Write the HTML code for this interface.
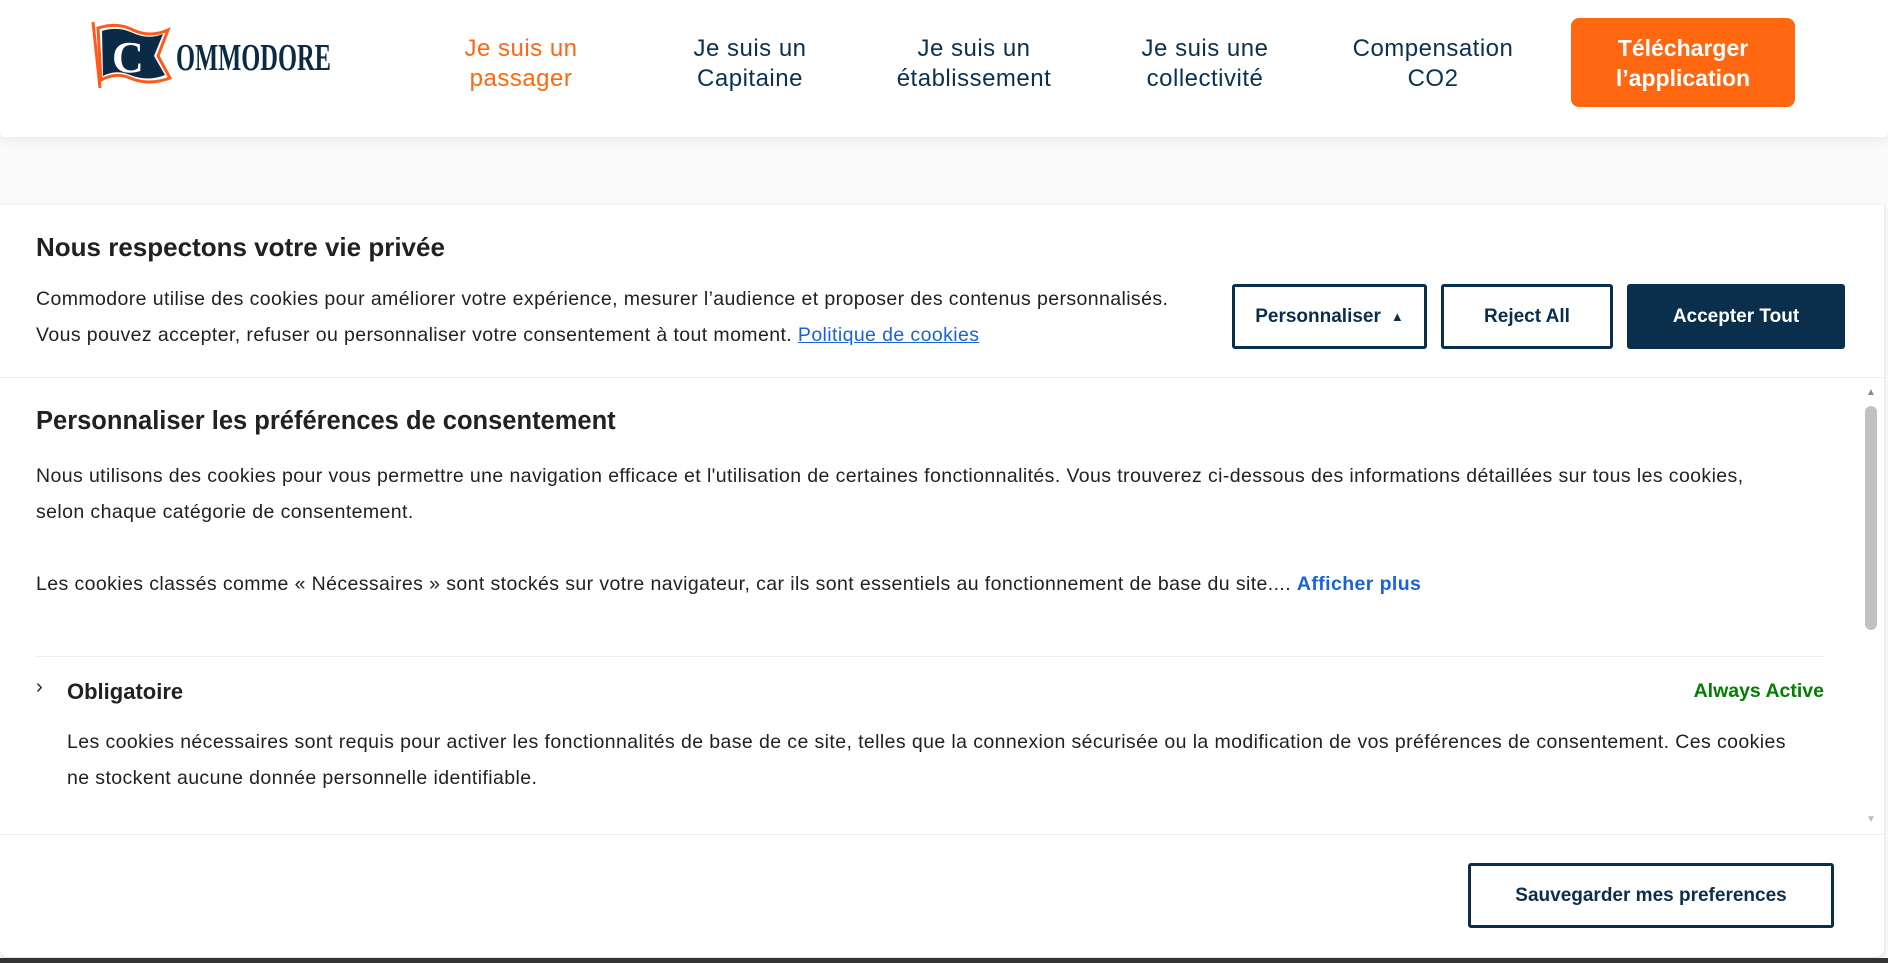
<!DOCTYPE html>
<html><head><meta charset="utf-8"><style>
*{margin:0;padding:0;box-sizing:border-box}
body{width:1888px;height:963px;overflow:hidden;background:#fafafa;font-family:"Liberation Sans",sans-serif;position:relative;color:#212121}
.hdr{position:absolute;left:0;top:0;width:1888px;height:137px;background:#fff;box-shadow:0 4px 12px rgba(0,0,0,.06);border-radius:0 0 6px 6px}
.nav{position:absolute;top:34px;text-align:center;font-size:24px;letter-spacing:.5px;line-height:30px;color:#0a3150;transform:translateX(-50%);white-space:nowrap}
.dl{position:absolute;left:1571px;top:18px;width:224px;height:89px;background:#ff6711;border-radius:8px;color:#fff;font-size:23px;line-height:30px;text-align:center;padding-top:15px;font-weight:bold}
.modal{position:absolute;left:0;top:205px;width:1884px;height:752px;background:#fff;border-radius:0 0 8px 8px;box-shadow:0 1px 4px rgba(0,0,0,.15)}
.abs{position:absolute}
.t{font-size:19.5px;letter-spacing:.4px;line-height:36px;color:#212121}
.btn{position:absolute;border:3px solid #0a2f4c;border-radius:3px;color:#0a2f4c;font-size:19px;display:flex;align-items:center;justify-content:center;font-weight:bold}
.hr{position:absolute;height:1px;background:#eee}
</style></head><body>
<div class="hdr">
<svg class="abs" style="left:88px;top:20px" width="250" height="70" viewBox="0 0 250 70">
<path d="M5 2 L12 68" stroke="#ff5a1a" stroke-width="3"/>
<path d="M10 8 Q30 2 45 10 Q62 18 80 10 L70 36 L82 58 Q60 66 42 58 Q28 52 13 60 Z" fill="#fff" stroke="#ff5a1a" stroke-width="3"/>
<path d="M14 11 Q30 6 45 13 Q60 20 75 14 L66 36 L77 55 Q60 62 42 55 Q28 49 15 56 Z" fill="#0a2a45"/>
<text x="24" y="52" font-family="Liberation Serif" font-size="44" font-weight="bold" fill="#fff">C</text>
<text x="88" y="50" font-family="Liberation Serif" font-size="38" font-weight="bold" fill="#0a2a45" textLength="155" lengthAdjust="spacingAndGlyphs">OMMODORE</text>
</svg>
<div class="nav" style="left:521px;color:#ff6711">Je suis un<br>passager</div>
<div class="nav" style="left:750px">Je suis un<br>Capitaine</div>
<div class="nav" style="left:974px">Je suis un<br>établissement</div>
<div class="nav" style="left:1205px">Je suis une<br>collectivité</div>
<div class="nav" style="left:1433px">Compensation<br>CO2</div>
<div class="dl">Télécharger<br>l’application</div>
</div>
<div class="modal">
<div class="abs" style="left:36px;top:27px;font-size:26px;font-weight:bold;color:#212121">Nous respectons votre vie privée</div>
<div class="abs t" style="left:36px;top:76px">Commodore utilise des cookies pour améliorer votre expérience, mesurer l’audience et proposer des contenus personnalisés.<br>Vous pouvez accepter, refuser ou personnaliser votre consentement à tout moment. <span style="color:#1863dc;text-decoration:underline">Politique de cookies</span></div>
<div class="btn" style="left:1232px;top:79px;width:195px;height:65px">Personnaliser <span style="font-size:13px;margin-left:10px">▲</span></div>
<div class="btn" style="left:1441px;top:79px;width:172px;height:65px">Reject All</div>
<div class="btn" style="left:1627px;top:79px;width:218px;height:65px;background:#0a2f4c;color:#fff;border-color:#0a2f4c">Accepter Tout</div>
<div class="hr" style="left:0;top:172px;width:1884px"></div>
<div class="abs" style="left:36px;top:202px;font-size:25.5px;font-weight:bold">Personnaliser les préférences de consentement</div>
<div class="abs t" style="left:36px;top:253px;width:1760px">Nous utilisons des cookies pour vous permettre une navigation efficace et l'utilisation de certaines fonctionnalités. Vous trouverez ci-dessous des informations détaillées sur tous les cookies,<br>selon chaque catégorie de consentement.</div>
<div class="abs t" style="left:36px;top:361px">Les cookies classés comme « Nécessaires » sont stockés sur votre navigateur, car ils sont essentiels au fonctionnement de base du site.... <b style="color:#1863dc">Afficher plus</b></div>
<div class="hr" style="left:36px;top:451px;width:1788px"></div>
<div class="abs" style="left:36px;top:471px;font-size:20px">›</div>
<div class="abs" style="left:67px;top:474px;font-size:22px;font-weight:bold">Obligatoire</div>
<div class="abs" style="right:60px;top:475px;font-size:19.5px;font-weight:bold;color:#008000">Always Active</div>
<div class="abs t" style="left:67px;top:519px;width:1760px">Les cookies nécessaires sont requis pour activer les fonctionnalités de base de ce site, telles que la connexion sécurisée ou la modification de vos préférences de consentement. Ces cookies<br>ne stockent aucune donnée personnelle identifiable.</div>
<div class="abs" style="left:1864px;top:180px;width:16px;height:452px;background:#fff"></div>
<div class="abs" style="left:1866px;top:182px;font-size:10px;color:#888">▲</div>
<div class="abs" style="left:1865px;top:201px;width:12px;height:224px;background:#c1c1c1;border-radius:6px"></div>
<div class="abs" style="left:1866px;top:609px;font-size:10px;color:#bbb">▼</div>
<div class="hr" style="left:0;top:629px;width:1884px"></div>
<div class="btn" style="left:1468px;top:658px;width:366px;height:65px">Sauvegarder mes preferences</div>
</div>
<div class="abs" style="left:0;top:958px;width:1888px;height:5px;background:#333"></div>
</body></html>
